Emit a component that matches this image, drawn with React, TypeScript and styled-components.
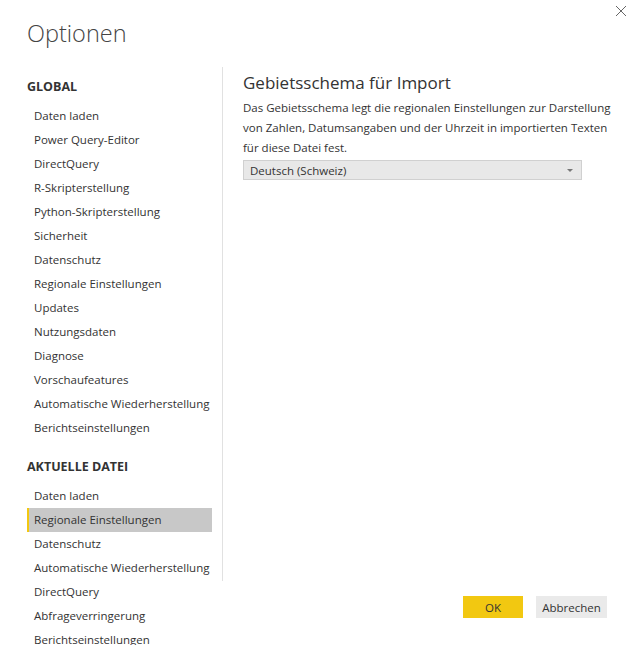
import React from 'react';
import styled, { createGlobalStyle } from 'styled-components';

const GlobalStyle = createGlobalStyle`
  html, body {
    margin: 0;
    padding: 0;
    background: #fff;
  }
  body {
    font-family: "Open Sans", "Noto Sans", Arial, sans-serif;
    color: #333;
  }
`;

const Dialog = styled.div`
  width: 635px;
  height: 645px;
  overflow: hidden;
  background: #fff;
  display: flex;
  flex-direction: column;
`;

const Header = styled.header`
  display: flex;
  justify-content: space-between;
  align-items: flex-start;
  padding: 17px 8px 0 27px;
  height: 32px;
`;

const Title = styled.h1`
  margin: 0;
  font-size: 23.5px;
  line-height: 32px;
  font-weight: 300;
  color: #444;
`;

const CloseButton = styled.button`
  border: none;
  background: none;
  padding: 0;
  margin-top: -12px;
  width: 12px;
  height: 12px;
  display: flex;
  cursor: pointer;
`;

const Body = styled.div`
  display: flex;
  margin-top: 18px;
  height: 514px;
`;

const Sidebar = styled.nav`
  width: 185px;
  flex: none;
  padding: 10px 10px 0 27px;
  border-right: 1px solid #e1e1e1;
`;

const SectionTitle = styled.div<{ $first?: boolean }>`
  font-size: 12.5px;
  line-height: 20px;
  font-weight: 700;
  color: #333;
  margin-top: ${({ $first }) => ($first ? '0' : '17px')};
  margin-bottom: 7px;
`;

const NavList = styled.ul`
  list-style: none;
  margin: 0;
  padding: 0;
`;

const NavItem = styled.li<{ $active?: boolean }>`
  height: 24px;
  line-height: 24px;
  font-size: 11.5px;
  padding-left: 5px;
  white-space: nowrap;
  color: #333;
  border-left: 2px solid ${({ $active }) => ($active ? '#f2c811' : 'transparent')};
  background: ${({ $active }) => ($active ? '#c8c8c8' : 'transparent')};
`;

const Content = styled.section`
  flex: 1;
  padding: 4px 20px 0 20px;
`;

const Heading = styled.h2`
  margin: 0 0 3px;
  font-size: 17px;
  line-height: 24px;
  font-weight: 400;
  color: #333;
`;

const Description = styled.p`
  margin: 0;
  font-size: 11.5px;
  line-height: 20px;
  color: #333;
  width: 375px;
`;

const Select = styled.div`
  margin-top: 2px;
  width: 339px;
  height: 20px;
  box-sizing: border-box;
  border: 1px solid #d0d0d0;
  background: #e8e8e8;
  display: flex;
  align-items: center;
  justify-content: space-between;
  padding: 0 8px 0 6px;
  font-size: 11.5px;
  color: #333;
`;

const Caret = styled.span`
  width: 0;
  height: 0;
  border-left: 3px solid transparent;
  border-right: 3px solid transparent;
  border-top: 3px solid #777;
`;

const Footer = styled.footer`
  display: flex;
  justify-content: flex-end;
  gap: 13px;
  padding-right: 28px;
  margin-top: 15px;
`;

const Button = styled.button<{ $primary?: boolean }>`
  height: 22px;
  width: ${({ $primary }) => ($primary ? '60px' : '71px')};
  border: none;
  padding: 0;
  font-family: inherit;
  font-size: 11.5px;
  color: #333;
  background: ${({ $primary }) => ($primary ? '#f2c811' : '#eaeaea')};
  cursor: pointer;
`;

const globalItems = [
  'Daten laden',
  'Power Query-Editor',
  'DirectQuery',
  'R-Skripterstellung',
  'Python-Skripterstellung',
  'Sicherheit',
  'Datenschutz',
  'Regionale Einstellungen',
  'Updates',
  'Nutzungsdaten',
  'Diagnose',
  'Vorschaufeatures',
  'Automatische Wiederherstellung',
  'Berichtseinstellungen',
];

const fileItems = [
  'Daten laden',
  'Regionale Einstellungen',
  'Datenschutz',
  'Automatische Wiederherstellung',
  'DirectQuery',
  'Abfrageverringerung',
  'Berichtseinstellungen',
];

const App = () => (
  <>
    <GlobalStyle />
    <Dialog>
      <Header>
        <Title>Optionen</Title>
        <CloseButton aria-label="Schließen">
          <svg width="12" height="12" viewBox="0 0 12 12">
            <path d="M1 1 L11 11 M11 1 L1 11" stroke="#666" strokeWidth="1" fill="none" />
          </svg>
        </CloseButton>
      </Header>
      <Body>
        <Sidebar>
          <SectionTitle $first>GLOBAL</SectionTitle>
          <NavList>
            {globalItems.map((item) => (
              <NavItem key={item}>{item}</NavItem>
            ))}
          </NavList>
          <SectionTitle>AKTUELLE DATEI</SectionTitle>
          <NavList>
            {fileItems.map((item) => (
              <NavItem key={item} $active={item === 'Regionale Einstellungen'}>
                {item}
              </NavItem>
            ))}
          </NavList>
        </Sidebar>
        <Content>
          <Heading>Gebietsschema für Import</Heading>
          <Description>
            Das Gebietsschema legt die regionalen Einstellungen zur Darstellung von Zahlen,
            Datumsangaben und der Uhrzeit in importierten Texten für diese Datei fest.
          </Description>
          <Select>
            <span>Deutsch (Schweiz)</span>
            <Caret />
          </Select>
        </Content>
      </Body>
      <Footer>
        <Button $primary>OK</Button>
        <Button>Abbrechen</Button>
      </Footer>
    </Dialog>
  </>
);

export default App;
